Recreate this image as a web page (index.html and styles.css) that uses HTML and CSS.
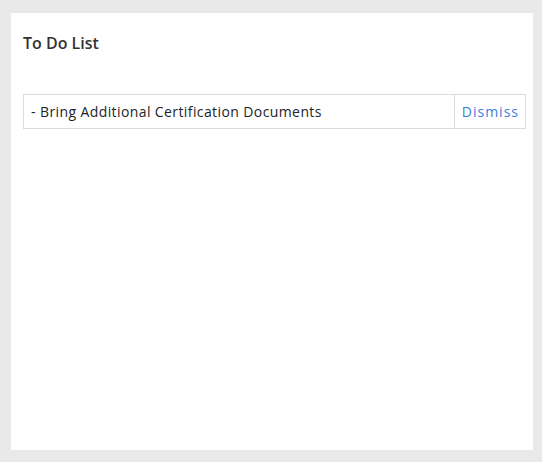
FILE: index.html
```html
<!DOCTYPE html>
<html>
<head>
<meta charset="utf-8">
<link rel="stylesheet" href="styles.css">
</head>
<body>
<div class="panel">
  <h3 class="title">To Do List</h3>
  <table class="todo">
    <tr>
      <td class="task">- Bring Additional Certification Documents</td>
      <td class="action"><a href="#">Dismiss</a></td>
    </tr>
  </table>
</div>
</body>
</html>
```
FILE: styles.css
```css
html, body {
  margin: 0;
  padding: 0;
  background: #e9e9e9;
  font-family: "Open Sans", "Liberation Sans", sans-serif;
  color: #212529;
}
.panel {
  box-sizing: border-box;
  margin: 13px 0 0 11px;
  width: 522px;
  height: 437px;
  background: #fff;
  padding: 20px 0 0 12px;
}
.title {
  margin: 0;
  font-size: 16px;
  font-weight: 600;
  line-height: 20px;
  color: #333;
}
.todo {
  margin-top: 41px;
  width: 503px;
  border-collapse: collapse;
  font-size: 14px;
  letter-spacing: 0.4px;
}
.todo td {
  border: 1px solid #dcdcdc;
  height: 33px;
  padding: 0 7px;
  line-height: 20px;
}
.todo .action {
  width: 57px;
  padding-right: 6px;
}
.todo .action a {
  color: #3c7de0;
  text-decoration: none;
  letter-spacing: 1px;
}
```
